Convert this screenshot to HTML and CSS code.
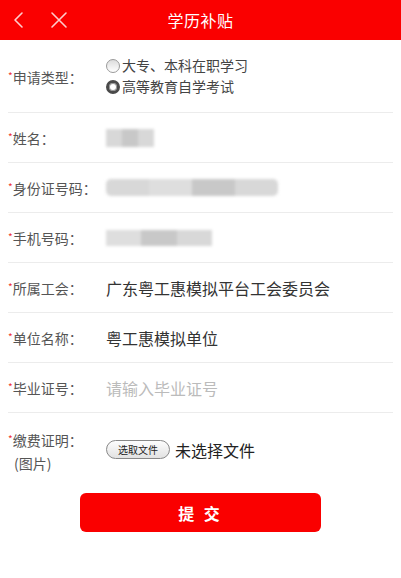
FILE: index.html
```html
<!DOCTYPE html>
<html lang="zh">
<head>
<meta charset="utf-8">
<title>学历补贴</title>
<link rel="stylesheet" href="styles.css">
</head>
<body>
<header class="topbar">
  <div class="nav-icons">
    <svg class="icon" width="20" height="40" viewBox="0 0 20 40"><path d="M16 13 L9 20 L16 27" fill="none" stroke="rgba(255,255,255,0.8)" stroke-width="1.6" stroke-linecap="round" stroke-linejoin="round"/></svg>
    <svg class="icon icon-close" width="20" height="40" viewBox="0 0 20 40"><path d="M3 13 L17 27 M17 13 L3 27" fill="none" stroke="rgba(255,255,255,0.8)" stroke-width="1.6" stroke-linecap="round"/></svg>
  </div>
  <h1 class="title">学历补贴</h1>
</header>

<form class="form">
  <div class="row row-type">
    <div class="label"><span class="star">*</span>申请类型：</div>
    <div class="radios">
      <div class="radio"><span class="dot"></span>大专、本科在职学习</div>
      <div class="radio"><span class="dot dot-on"></span>高等教育自学考试</div>
    </div>
  </div>
  <div class="row">
    <div class="label"><span class="star">*</span>姓名：</div>
    <div class="blur blur-name"><span class="b1"></span><span class="b2"></span><span class="b1"></span></div>
  </div>
  <div class="row">
    <div class="label"><span class="star">*</span>身份证号码：</div>
    <div class="blur blur-id"><span class="b1"></span><span class="b3"></span><span class="b2"></span><span class="b1"></span></div>
  </div>
  <div class="row">
    <div class="label"><span class="star">*</span>手机号码：</div>
    <div class="blur blur-phone"><span class="b3"></span><span class="b2"></span><span class="b1"></span></div>
  </div>
  <div class="row">
    <div class="label"><span class="star">*</span>所属工会：</div>
    <div class="value">广东粤工惠模拟平台工会委员会</div>
  </div>
  <div class="row">
    <div class="label"><span class="star">*</span>单位名称：</div>
    <div class="value">粤工惠模拟单位</div>
  </div>
  <div class="row">
    <div class="label"><span class="star">*</span>毕业证号：</div>
    <div class="value placeholder">请输入毕业证号</div>
  </div>
  <div class="row row-file">
    <div class="label label-two"><span class="star">*</span>缴费证明：<br><span class="sub">(图片)</span></div>
    <div class="file">
      <span class="file-btn">选取文件</span>
      <span class="file-text">未选择文件</span>
    </div>
  </div>
  <div class="submit-wrap">
    <button type="button" class="submit">提 交</button>
  </div>
</form>
</body>
</html>
```

FILE: styles.css
```css
* { box-sizing: border-box; }
html, body {
  margin: 0;
  padding: 0;
  background: #fff;
  font-family: "Noto Sans CJK SC", "Noto Sans", sans-serif;
}
.topbar {
  position: relative;
  height: 40px;
  background: #fa0000;
  display: flex;
  align-items: center;
  justify-content: center;
}
.nav-icons {
  position: absolute;
  left: 6px;
  top: 0;
  display: flex;
  gap: 23px;
}
.icon { display: block; }
.title {
  margin: 0;
  font-size: 16px;
  font-weight: normal;
  color: #fff;
  letter-spacing: 0.5px;
}
.form {
  margin: 0 8px;
}
.row {
  display: flex;
  align-items: center;
  height: 50px;
  border-bottom: 1px solid #ececec;
}
.row-type {
  height: 73px;
}
.label {
  width: 98px;
  flex-shrink: 0;
  font-size: 14px;
  color: #555;
  line-height: 23px;
}
.star {
  color: #e33;
  font-size: 10px;
  vertical-align: 3px;
}
.sub {
  margin-left: 6px;
}
.radios {
  display: flex;
  flex-direction: column;
}
.radio {
  display: flex;
  align-items: center;
  font-size: 14px;
  color: #444;
  line-height: 21px;
}
.dot {
  flex-shrink: 0;
  width: 14px;
  height: 14px;
  border-radius: 50%;
  border: 1px solid #9a9a9a;
  background: linear-gradient(#dcdcdc, #fff);
  margin-right: 2px;
}
.dot-on {
  background: #fff;
  border: 3.5px solid #4a4a4a;
  box-shadow: inset 0 0 0 1px #999;
}
.value {
  font-size: 16px;
  color: #333;
}
.placeholder {
  color: #bbb;
}
.blur {
  display: flex;
  filter: blur(1.5px);
}
.blur span { display: block; flex: 1; }
.blur-name { height: 18px; width: 48px; }
.blur-id { height: 17px; width: 172px; border-radius: 5px; overflow: hidden; }
.blur-phone { height: 16px; width: 106px; }
.b1 { background: #d8d8d8; }
.b2 { background: #c8c8c8; }
.b3 { background: #dedede; }
.row-file {
  height: auto;
  padding: 14px 0;
  border-bottom: none;
}
.file {
  display: flex;
  align-items: center;
  gap: 5px;
  margin-top: -3px;
}
.file-btn {
  display: inline-block;
  height: 19px;
  line-height: 17px;
  padding: 0 11px;
  font-size: 10px;
  color: #222;
  border: 1px solid #888;
  border-radius: 10px;
  background: linear-gradient(#fdfdfd, #e2e2e2);
}
.file-text {
  font-size: 16px;
  color: #222;
}
.submit-wrap {
  display: flex;
  justify-content: center;
  padding-top: 4px;
}
.submit {
  width: 241px;
  height: 39px;
  border: none;
  border-radius: 6px;
  background: #fa0000;
  color: #fff;
  font-family: "Noto Sans CJK SC", sans-serif;
  font-size: 16px;
  font-weight: bold;
  letter-spacing: 3px;
}
```
